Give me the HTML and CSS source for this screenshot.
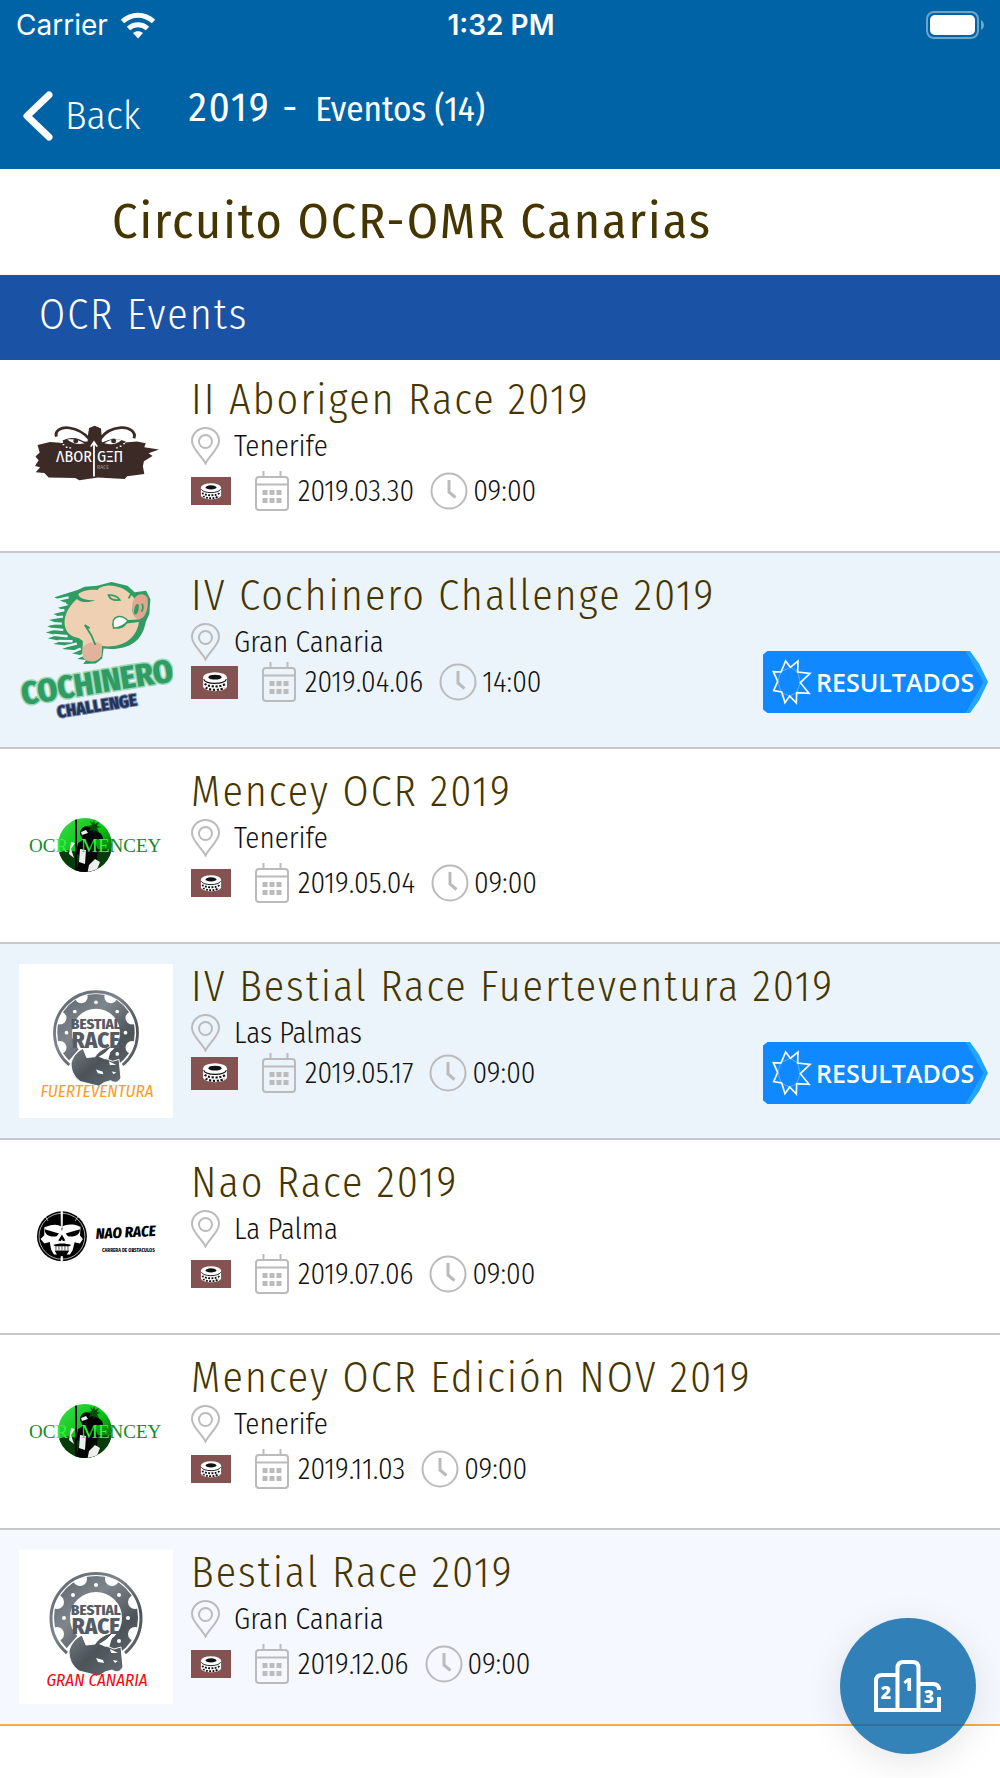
FILE: index.html
```html
<!DOCTYPE html>
<html lang="es">
<head>
  <meta charset="UTF-8">
  <meta name="viewport" content="width=device-width, initial-scale=1">
  <title>Circuito OCR-OMR Canarias</title>
  <link rel="stylesheet" href="styles.css">
</head>
<body>
  <!-- Shared icons -->
  <svg class="sprite" width="0" height="0" aria-hidden="true">
    <symbol id="pin" viewBox="0 0 29 38">
      <path d="M14.500 36.500C11 29 1 22 1 14a13.500 13 0 0 1 27 0c0 8-10 15-13.500 22.500z"/>
      <circle cx="14.500" cy="14.500" r="6.500"/>
    </symbol>
    <symbol id="calendar" viewBox="0 0 34 40">
      <rect x="1" y="6" width="32" height="33" rx="3"/>
      <path d="M1 13.500h32M8.500 0v6M25.500 0v6"/>
      <path class="dots" d="M7.500 19h5v5h-5zM14.500 19h5v5h-5zM21.500 19h5v5h-5zM7.500 27h5v5h-5zM14.500 27h5v5h-5zM21.500 27h5v5h-5z"/>
    </symbol>
    <symbol id="clock" viewBox="0 0 38 38">
      <circle cx="19" cy="19" r="17.500"/>
      <path d="M19 8v12l6.500 5.500" stroke-width="3"/>
    </symbol>
    <symbol id="tire" viewBox="0 0 24 18">
      <path d="M1 5v8c1 6 21 6 22 0V5z" fill="#fff"/>
      <ellipse cx="12" cy="5" rx="11" ry="5" fill="#fff"/>
      <ellipse cx="12" cy="4.500" rx="6" ry="2.300" fill="#111"/>
      <path d="M1.500 6.500c2 5 19 5 21 0" fill="none" stroke="#111"/>
      <path d="M2.500 10.500c3 3.500 16 3.500 19 0M3.500 14c3 3 14 3 17 0" fill="none" stroke="#111" stroke-width="2" stroke-dasharray="2 1.500"/>
    </symbol>
    <symbol id="star" viewBox="98 88 118 138">
      <path d="M138 94l14 19 23-19-1 33 37 4-29 28 26 32-37-2-1 31-20-21-14 20-10-32-24-4 12-28-13-29 23 1z"/>
      <path class="thin" d="M124 126l28-13 22 14 8 32-11 30-21 10-24-10-12-34z"/>
    </symbol>
    <symbol id="mencey" viewBox="0 0 154 154">
      <clipPath id="mencey-disc"><circle cx="66" cy="76" r="27"/></clipPath>
      <linearGradient id="mencey-bg" x1="0" y1="0" x2="1" y2="1">
        <stop offset="0" stop-color="#3ddc4e"/>
        <stop offset=".5" stop-color="#08c512"/>
        <stop offset="1" stop-color="#063d08"/>
      </linearGradient>
      <g clip-path="url(#mencey-disc)">
        <path d="M39 49h54v54H39z" fill="url(#mencey-bg)"/>
        <path d="M39 84l9-3 10 2 8-4 27 2v24H39z" fill="#073b09"/>
        <path d="M56 49h2v54h-2zM61 65c0-8 8-10 13-5 5 3 10 4 10 10l-9 1 4 10-3 22H57l4-16-4-3 2-10 5-3z" fill="#020602"/>
        <path d="M62 63l5-2 2 3-6 2zM52 73l4 1-4 6 3 9-5-4zM61 80l6 1-1 14-6-2zM70 96l6-6 5 3-5 13h-8z" fill="#eee"/>
        <path d="M75 51l1 4 4-2-2 4 4 1-4 1 2 4-4-2-1 3-1-3-4 1 2-4-3-1 4-1-2-4 3 2z" fill="#064b08"/>
      </g>
    </symbol>
    <symbol id="bestial" viewBox="0 0 154 154">
      <linearGradient id="steel" gradientUnits="userSpaceOnUse" x1="32" y1="24" x2="122" y2="124">
        <stop offset="0" stop-color="#59616a"/>
        <stop offset=".35" stop-color="#7e858c"/>
        <stop offset=".65" stop-color="#4c5359"/>
        <stop offset="1" stop-color="#6b7278"/>
      </linearGradient>
      <circle cx="77" cy="68" r="34" fill="none" stroke="url(#steel)" stroke-width="16"/>
      <g fill="#fff">
        <circle cx="93" cy="29" r="7"/><circle cx="116" cy="52" r="7"/><circle cx="116" cy="84" r="7"/>
        <circle cx="61" cy="29" r="7"/><circle cx="38" cy="52" r="7"/><circle cx="38" cy="84" r="7"/>
        <circle cx="77" cy="35" r="2"/><circle cx="100" cy="45" r="2"/><circle cx="109" cy="68" r="2"/>
        <circle cx="54" cy="45" r="2"/><circle cx="45" cy="68" r="2"/><circle cx="100" cy="91" r="2"/>
        <path d="M60 84h34l-4 14 14 6 8 14H50l-4-18z"/>
      </g>
      <path d="M48 103a45 45 0 1 1 58 0" fill="none" stroke="url(#steel)" stroke-width="3"/>
      <path d="M50 101c2-8 7-13 13-16l4 10 9-1c4-6 10-10 20-12-6 4-10 9-11 13l10 4 7-2 2 20c-3 5-6 6-11 3l-7 2-6 4-20-5c-8-6-10-13-10-20z" fill="url(#steel)" stroke="#fff" stroke-width="1"/>
      <path d="M80 94l16-10-9 13M77 108l7 2 1 3-6-1zM94 110l5 1-3 2zM91 99l8 4-7 0z" fill="#fff"/>
    </symbol>
  </svg>

  <header class="top">
    <div class="status">
      <span class="carrier">Carrier
        <svg class="wifi" viewBox="0 0 36 27" aria-hidden="true">
          <path d="M18 26.500l-5-5.500c3-2.500 7-2.500 10 0z" fill="#fff"/>
          <path d="M8.500 16.500c5.500-5 13.500-5 19 0M2.500 9.500c9-8.500 22-8.500 31 0" fill="none" stroke="#fff" stroke-width="5"/>
        </svg>
      </span>
      <span class="time">1:32 PM</span>
      <svg class="battery" viewBox="0 0 60 28" aria-hidden="true">
        <rect x="1" y="1" width="51" height="26" rx="7" fill="none" stroke="#6aa3cc" stroke-width="2"/>
        <rect x="4" y="4" width="45" height="20" rx="5" fill="#fff"/>
        <path d="M55 9c4 2 4 8 0 10z" fill="#6aa3cc"/>
      </svg>
    </div>
    <nav class="nav">
      <a class="back" href="#">
        <svg viewBox="0 0 30 50" aria-hidden="true"><path d="M26 4L4 25l22 21" fill="none" stroke="#fff" stroke-width="7" stroke-linecap="round" stroke-linejoin="round"/></svg>
        Back
      </a>
      <p class="nav-title">2019 - <small>Eventos (14)</small></p>
    </nav>
  </header>

  <main>
    <h1>Circuito OCR-OMR Canarias</h1>
    <h2>OCR Events</h2>

    <ul class="events">
      <li class="event">
        <svg class="logo" viewBox="0 0 154 154" role="img" aria-label="Aborigen Race">
          <g transform="scale(.357 .333) translate(-53 -51)">
            <path d="M105 255l35-9 45 4 65-6 75 6 58-5 25 5-4 12 41 7-29 11 11 8-24 16-3 15 4 23-48 7-7 8-75-4-52 8-11-7-75-1-12-14-24-2 12-15-14-4 10-17-9-11 12-12z" fill="#3b2a25"/>
            <path d="M158 230c-6-18 13-30 37-26 25 4 40 15 54 32l4-29 12-5 14 6 2 29c12-20 31-32 57-34 23-2 44 13 37 32" fill="none" stroke="#3b2a25" stroke-width="8"/>
            <path d="M250 205h30l8 65h-46zM175 242c20-11 40-12 69 9l-65 8zM280 253c30-21 48-18 72-8l-13 15z" fill="#3b2a25"/>
            <path d="M188 239c18-4 36 1 48 12-20 4-34 0-48-12zM292 250c16-12 32-14 48-10-14 14-28 15-48 10z" fill="#fff"/>
            <circle cx="212" cy="243" r="7" fill="#3b2a25"/><circle cx="318" cy="243" r="7" fill="#3b2a25"/>
            <path d="M263 350V250M254 260l9-14 9 14" fill="none" stroke="#fff" stroke-width="5"/>
            <path d="M175 254h5M184 262h5M194 264h5M345 251h5M335 259h5M325 264h5" stroke="#fff" stroke-width="4"/>
          </g>
          <text class="aborigen-word" x="37" y="85">ΛBOR</text>
          <text class="aborigen-word" x="78" y="85">GΞΠ</text>
          <text class="aborigen-sub" x="78" y="92">RACE</text>
        </svg>
        <div class="info">
          <h3>II Aborigen Race 2019</h3>
          <p class="place"><svg class="icon pin"><use href="#pin"/></svg>Tenerife</p>
          <p class="meta">
            <span class="flag"><svg><use href="#tire"/></svg></span>
            <svg class="icon calendar"><use href="#calendar"/></svg><time>2019.03.30</time>
            <svg class="icon clock"><use href="#clock"/></svg><time>09:00</time>
          </p>
        </div>
      </li>

      <li class="event tinted">
        <svg class="logo" viewBox="0 0 154 154" role="img" aria-label="Cochinero Challenge">
          <g transform="scale(.357 .333) translate(-53 -69)">
            <path d="M152 142l65-22 20-10 35-3 40-11 45 11 20 20 32-5 12 26-3 44-10 24c-10 60-50 87-118 80l-4 30-18 15-35 1 8-12-25-3 13-10-28-7 15-8-42-5 20-9-45-6 23-9-38-7 24-10-30-8 28-9-24-10 30-8-24-11 30-8-18-10 32-9-20-10 30-8-15-9z" fill="#2e9c63"/>
            <path d="M150 152l42-10M148 169l37-9M144 187l36-7M142 204l34-4M142 220l31 1M145 237l32 3M150 255l39 4M163 273l40 1M182 289l33-8M202 307l24-11M215 323l20-9" stroke="#ecf4fb" stroke-width="7"/>
            <path d="M215 147c-48 45-45 110 5 117l12 9-2 43c10 20 42 19 53 1l2-29c55 8 97-20 104-72l-34 5c-10 20-36 20-40 4 6-24 30-30 42-15l35-1c-24-8-28-35-12-58-20-32-50-46-81-44-13 2-22 5-26 13-28-2-46 5-54 13 2 10 17 20 48 17-15 8-38 10-52-3z" fill="#f0d0b2"/>
            <path d="M232 291c15-15 37-20 54-7l-2 35c-12 20-40 21-52 4z" fill="#e2b39c"/>
            <path d="M370 166c2-30 28-45 43-23 4 30-5 62-24 65-14-1-18-18-19-42z" fill="#e2a590"/>
            <ellipse cx="382" cy="178" rx="6" ry="16" fill="#2e9c63" transform="rotate(12 382 178)"/>
            <path d="M396 185c6-10 5-18 1-24M304 135c15 0 27 7 31 15-17 2-28-3-31-15zM360 145l8-15M237 225c8 12 20 28 30 60M237 225l14 10" fill="none" stroke="#2e9c63" stroke-width="5"/>
            <path d="M318 235c-10-42 26-43 40-22-7 10-22 20-40 22z" fill="#fff" stroke="#2e9c63" stroke-width="4"/>
            <path d="M358 213l38-2" stroke="#2e9c63" stroke-width="4"/>
          </g>
          <text class="cochinero-word" transform="translate(4 132) rotate(-9)">COCHINERO</text>
          <text class="challenge-word" transform="translate(39 145) rotate(-9)">CHALLENGE</text>
        </svg>
        <div class="info">
          <h3>IV Cochinero Challenge 2019</h3>
          <p class="place"><svg class="icon pin"><use href="#pin"/></svg>Gran Canaria</p>
          <p class="meta">
            <span class="flag"><svg><use href="#tire"/></svg></span>
            <svg class="icon calendar"><use href="#calendar"/></svg><time>2019.04.06</time>
            <svg class="icon clock"><use href="#clock"/></svg><time>14:00</time>
          </p>
        </div>
        <a class="results" href="#"><svg><use href="#star"/></svg>RESULTADOS</a>
      </li>

      <li class="event">
        <svg class="logo" viewBox="0 0 154 154" role="img" aria-label="OCR Mencey">
          <use href="#mencey"/>
          <text class="mencey-word" x="10" y="83">OC<tspan class="lime">R</tspan></text>
          <text class="mencey-word" x="62" y="83"><tspan class="lime">ME</tspan>NCEY</text>
        </svg>
        <div class="info">
          <h3>Mencey OCR 2019</h3>
          <p class="place"><svg class="icon pin"><use href="#pin"/></svg>Tenerife</p>
          <p class="meta">
            <span class="flag"><svg><use href="#tire"/></svg></span>
            <svg class="icon calendar"><use href="#calendar"/></svg><time>2019.05.04</time>
            <svg class="icon clock"><use href="#clock"/></svg><time>09:00</time>
          </p>
        </div>
      </li>

      <li class="event tinted">
        <svg class="logo boxed" viewBox="0 0 154 154" role="img" aria-label="Bestial Race Fuerteventura">
          <use href="#bestial" x="6" y="6" width="142" height="142"/>
          <text class="bestial-word" x="77" y="65">BESTIAL</text>
          <text class="bestial-word race" x="77" y="84">RACE</text>
          <text class="bestial-place orange" x="78" y="133">FUERTEVENTURA</text>
        </svg>
        <div class="info">
          <h3>IV Bestial Race Fuerteventura 2019</h3>
          <p class="place"><svg class="icon pin"><use href="#pin"/></svg>Las Palmas</p>
          <p class="meta">
            <span class="flag"><svg><use href="#tire"/></svg></span>
            <svg class="icon calendar"><use href="#calendar"/></svg><time>2019.05.17</time>
            <svg class="icon clock"><use href="#clock"/></svg><time>09:00</time>
          </p>
        </div>
        <a class="results" href="#"><svg><use href="#star"/></svg>RESULTADOS</a>
      </li>

      <li class="event">
        <svg class="logo" viewBox="0 0 154 154" role="img" aria-label="Nao Race">
          <g transform="scale(.333) translate(-57 90)">
            <circle cx="186" cy="139" r="75"/>
            <circle cx="186" cy="139" r="69" fill="none" stroke="#fff" stroke-width="2"/>
            <path d="M183 64h5l-1 50h-3zM183 200h5v14h-5zM135 78l9 15M235 78l-9 15" fill="#fff" stroke="#fff" stroke-width="2"/>
            <path d="M133 112c30-12 40-8 50-3l3 14 3-14c10-5 30-9 53 2l-2 26 9 10-9 14-16-4-6 24-8 13h-48l-8-14-5-24-16 5-11-14 11-11z" fill="#fff"/>
            <path d="M134 118l43 13-7 8c-20 4-36-4-36-21zM240 118l-43 13 7 8c20 4 36-4 36-21zM186 134l10 18-7 2-3-6-4 6-7-2zM160 165c16-6 36-6 54 0l-6 4h-42zM164 182h44l-9 14h-27z"/>
            <path d="M168 168v12M177 168v12M186 168v12M195 168v12M204 168v12" stroke="#000" stroke-width="2"/>
          </g>
          <text class="nao-word" transform="translate(77 79) rotate(-3)">NAO RACE</text>
          <text class="nao-sub" x="83" y="92">CARRERA DE OBSTACULOS</text>
        </svg>
        <div class="info">
          <h3>Nao Race 2019</h3>
          <p class="place"><svg class="icon pin"><use href="#pin"/></svg>La Palma</p>
          <p class="meta">
            <span class="flag"><svg><use href="#tire"/></svg></span>
            <svg class="icon calendar"><use href="#calendar"/></svg><time>2019.07.06</time>
            <svg class="icon clock"><use href="#clock"/></svg><time>09:00</time>
          </p>
        </div>
      </li>

      <li class="event">
        <svg class="logo" viewBox="0 0 154 154" role="img" aria-label="OCR Mencey">
          <use href="#mencey"/>
          <text class="mencey-word" x="10" y="83">OC<tspan class="lime">R</tspan></text>
          <text class="mencey-word" x="62" y="83"><tspan class="lime">ME</tspan>NCEY</text>
        </svg>
        <div class="info">
          <h3>Mencey OCR Edición NOV 2019</h3>
          <p class="place"><svg class="icon pin"><use href="#pin"/></svg>Tenerife</p>
          <p class="meta">
            <span class="flag"><svg><use href="#tire"/></svg></span>
            <svg class="icon calendar"><use href="#calendar"/></svg><time>2019.11.03</time>
            <svg class="icon clock"><use href="#clock"/></svg><time>09:00</time>
          </p>
        </div>
      </li>

      <li class="event last">
        <svg class="logo boxed" viewBox="0 0 154 154" role="img" aria-label="Bestial Race Gran Canaria">
          <use href="#bestial"/>
          <text class="bestial-word" x="77" y="65">BESTIAL</text>
          <text class="bestial-word race" x="77" y="84">RACE</text>
          <text class="bestial-place red" x="78" y="136">GRAN CANARIA</text>
        </svg>
        <div class="info">
          <h3>Bestial Race 2019</h3>
          <p class="place"><svg class="icon pin"><use href="#pin"/></svg>Gran Canaria</p>
          <p class="meta">
            <span class="flag"><svg><use href="#tire"/></svg></span>
            <svg class="icon calendar"><use href="#calendar"/></svg><time>2019.12.06</time>
            <svg class="icon clock"><use href="#clock"/></svg><time>09:00</time>
          </p>
        </div>
      </li>
    </ul>
  </main>

  <button class="ranking" type="button" aria-label="Ranking">
    <svg viewBox="0 0 70 54">
      <path d="M3 51V22c0-4 2-6 6-6h14M24.500 51V9c0-4 2-6 6-6h9c4 0 6 2 6 6v42M46 25h14c4 0 6 2 6 6M66 38v13M1 51h67" fill="none" stroke="#fff" stroke-width="4"/>
      <g class="podium">
        <text x="13" y="40">2</text>
        <text x="35" y="32">1</text>
        <text x="56" y="44">3</text>
      </g>
    </svg>
  </button>
</body>
</html>
```
FILE: styles.css
```css
* {
  box-sizing: border-box;
}

body {
  margin: 0;
  background: #ffffff;
  color: #111111;
  font-family: 'Fira Sans Condensed', 'Roboto', sans-serif;
  font-weight: 300;
}

h1, h2, h3, p, ul {
  margin: 0;
  padding: 0;
}

a {
  color: inherit;
  text-decoration: none;
}

.sprite {
  position: absolute;
}

/* Header */
.top {
  height: 169px;
  background: #0063a6;
  color: #ffffff;
}

.status {
  display: grid;
  grid-template-columns: 1fr auto 1fr;
  align-items: center;
  height: 50px;
  padding: 0 14px 0 16px;
  font-family: 'Inter', sans-serif;
  font-size: 28px;
  font-weight: 400;
}

.carrier {
  display: flex;
  align-items: center;
  gap: 12px;
}

.time {
  font-weight: 600;
}

.wifi {
  width: 36px;
  height: 27px;
}

.battery {
  width: 60px;
  height: 28px;
  justify-self: end;
}

.nav {
  display: flex;
  align-items: flex-start;
  gap: 48px;
  padding: 33px 23px 0;
}

.back {
  display: flex;
  align-items: center;
  gap: 12px;
  height: 66px;
  font-size: 40px;
}

.back svg {
  width: 30px;
  height: 50px;
}

.nav-title {
  font-size: 41px;
  line-height: 50px;
  font-weight: 400;
  letter-spacing: 2px;
}

.nav-title small {
  margin-left: 4px;
  font-size: 35px;
  letter-spacing: 0;
}

h1 {
  padding: 16px 24px 18px 112px;
  color: #453600;
  font-size: 50px;
  line-height: 72px;
  font-weight: 400;
  letter-spacing: 2px;
}

h2 {
  padding: 14px 39px 19px;
  background: #1a52a5;
  color: #ffffff;
  font-size: 42px;
  line-height: 52px;
  font-weight: 300;
  letter-spacing: 2px;
}

/* Event list */
.events {
  list-style: none;
}

.event {
  display: flex;
  align-items: flex-start;
  height: 195px;
  padding: 20px 12px 0 19px;
  border-bottom: 2px solid #c8c8c8;
}

.event:first-child {
  height: 193px;
  padding-top: 17px;
}

.event.tinted {
  height: 196px;
  background: #ecf4fb;
}

.event.last {
  height: 196px;
  background: #f5f8ff;
  border-color: #f8ac45;
}

.logo {
  flex: none;
  width: 154px;
  height: 154px;
  margin-right: 18px;
}

.logo.boxed {
  background: #ffffff;
}

.info {
  flex: 1;
  min-width: 0;
  white-space: nowrap;
}

h3 {
  color: #453600;
  font-size: 42px;
  line-height: 46px;
  font-weight: 300;
  letter-spacing: 2px;
}

.place, .meta {
  display: flex;
  align-items: center;
  font-size: 29px;
}

.place {
  gap: 14px;
  height: 38px;
  margin-top: 4px;
}

.meta {
  height: 40px;
  margin-top: 6px;
}

.tinted .meta {
  margin-top: 1px;
}

.icon {
  flex: none;
  fill: none;
  stroke: #bbbbbb;
  stroke-width: 2;
}

.dots {
  fill: #bbbbbb;
  stroke: none;
}

.pin {
  width: 29px;
  height: 38px;
}

.calendar {
  width: 34px;
  height: 40px;
  margin: 0 9px 0 24px;
}

.clock {
  width: 38px;
  height: 38px;
  margin: 0 5px 0 16px;
}

.flag {
  display: flex;
  align-items: center;
  justify-content: center;
  width: 40px;
  height: 28px;
  background: #855252;
}

.flag svg {
  width: 22px;
  height: 17px;
}

.tinted .flag {
  width: 47px;
  height: 33px;
}

.tinted .flag svg {
  width: 26px;
  height: 20px;
}

/* Results tag */
.results {
  position: relative;
  z-index: 0;
  display: flex;
  flex: none;
  align-items: center;
  gap: 4px;
  width: 225px;
  height: 62px;
  margin-top: 78px;
  padding-left: 9px;
  border-radius: 6px;
  background: #22a4ff;
  clip-path: polygon(0 6%, 2% 0, 92% 0, 96% 20%, 100% 50%, 96% 80%, 92% 100%, 2% 100%, 0 94%);
  color: #ffffff;
  font-family: 'Open Sans', sans-serif;
  font-size: 25px;
  font-weight: 600;
}

.results::before {
  content: '';
  position: absolute;
  z-index: -1;
  inset: 0;
  background: #1088ff;
  clip-path: polygon(0 0, 90% 0, 98% 50%, 90% 100%, 0 100%);
}

.results svg {
  width: 40px;
  height: 46px;
  fill: none;
  stroke: #ffffff;
  stroke-width: 5;
}

.thin {
  stroke-width: 1;
}

/* Lettering in the logos */
.aborigen-word {
  fill: #ffffff;
  font-size: 16px;
  font-weight: 400;
}

.aborigen-sub {
  fill: #d8d0cc;
  font-size: 6px;
}

.cochinero-word, .challenge-word {
  font-weight: 800;
  paint-order: stroke;
  stroke-linejoin: round;
}

.cochinero-word {
  fill: #2e9c63;
  stroke: #9fd8b8;
  stroke-width: 3;
  font-size: 32px;
}

.challenge-word {
  fill: #22345c;
  stroke: #8290ac;
  stroke-width: 2;
  font-size: 17px;
}

.mencey-word {
  fill: #158a2a;
  font-family: 'Liberation Serif', serif;
  font-size: 19px;
}

.lime {
  fill: #35ef45;
}

.bestial-word {
  fill: #555c64;
  font-size: 15px;
  font-weight: 800;
  text-anchor: middle;
}

.bestial-word.race {
  font-size: 23px;
}

.bestial-place {
  font-size: 17px;
  font-style: italic;
  font-weight: 400;
  text-anchor: middle;
}

.orange {
  fill: #fb9d24;
}

.red {
  fill: #f00810;
}

.nao-word {
  font-size: 15px;
  font-style: italic;
  font-weight: 800;
}

.nao-sub {
  font-size: 5px;
  font-weight: 700;
}

/* Floating button */
.ranking {
  position: fixed;
  right: 24px;
  bottom: 24px;
  display: flex;
  align-items: center;
  justify-content: center;
  width: 136px;
  height: 136px;
  padding: 0;
  border: 0;
  border-radius: 50%;
  background: rgba(0, 99, 166, 0.8);
  box-shadow: 0 8px 36px rgba(0, 0, 0, 0.1);
}

.ranking svg {
  width: 70px;
  height: 54px;
}

.podium {
  fill: #ffffff;
  font-family: 'Open Sans', sans-serif;
  font-size: 18px;
  font-weight: 800;
  text-anchor: middle;
}
```
